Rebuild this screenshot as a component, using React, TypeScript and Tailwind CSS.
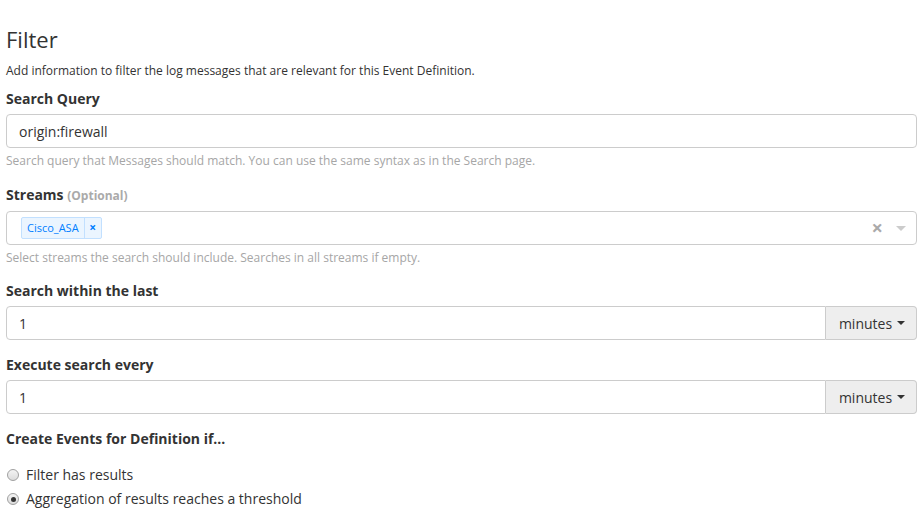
import React from "react";

function Caret() {
  return <span className="ml-[5px] inline-block h-0 w-0 border-x-[4px] border-t-[4px] border-x-transparent border-t-[#333] align-middle" />;
}

function Label({ children }: { children: React.ReactNode }) {
  return <div className="mb-[5px] text-[14px] font-bold leading-[20px] text-[#333]">{children}</div>;
}

function Help({ children }: { children: React.ReactNode }) {
  return <p className="mt-[4px] text-[12px] leading-[17px] text-[#a6a6a6]">{children}</p>;
}

function TimeInput({ value }: { value: string }) {
  return (
    <div className="flex h-[34px]">
      <div className="flex flex-1 items-center rounded-l-[4px] border border-[#ccc] bg-white px-[12px] text-[14px] text-[#333]">
        {value}
      </div>
      <div className="flex w-[91px] items-center justify-center rounded-r-[4px] border border-l-0 border-[#ccc] bg-[#eee] pl-[2px] text-[14px] text-[#333]">
        minutes
        <Caret />
      </div>
    </div>
  );
}

function Radio({ checked, label }: { checked?: boolean; label: string }) {
  return (
    <label className="flex h-[20px] items-center text-[14px] leading-[20px] text-[#333]">
      <span className="ml-[1px] mr-[7px] flex h-[12px] w-[12px] items-center justify-center rounded-full border border-[#a0a0a0] bg-gradient-to-b from-[#f4f4f4] to-[#dcdcdc]">
        {checked && <span className="h-[5px] w-[5px] rounded-full bg-[#333]" />}
      </span>
      {label}
    </label>
  );
}

export default function App() {
  return (
    <div className="min-h-[529px] bg-white pl-[6px] pr-[7px] pt-[26px] font-['Open_Sans',sans-serif] text-[#333]">
      <h2 className="text-[22px] leading-[26px] text-[#333]">Filter</h2>
      <p className="mt-[10px] text-[12px] leading-[17px] text-[#333]">
        Add information to filter the log messages that are relevant for this Event Definition.
      </p>

      <div className="mt-[10px]">
        <Label>Search Query</Label>
        <div className="flex h-[34px] items-center rounded-[4px] border border-[#ccc] px-[12px] text-[14px] text-[#333]">
          origin:firewall
        </div>
        <Help>Search query that Messages should match. You can use the same syntax as in the Search page.</Help>
      </div>

      <div className="mt-[16px]">
        <Label>
          Streams <span className="text-[12px] text-[#aaa]">(Optional)</span>
        </Label>
        <div className="flex h-[34px] items-center rounded-[4px] border border-[#ccc] pl-[14px] pr-[10px]">
          <span className="flex h-[22px] items-stretch rounded-[2px] border border-[#c2e0ff] bg-[#ebf5ff] text-[11px] text-[#007eff]">
            <span className="flex items-center px-[5px]">Cisco_ASA</span>
            <span className="flex w-[17px] items-center justify-center border-l border-[#c2e0ff] text-[12px] font-bold">×</span>
          </span>
          <span className="ml-auto mr-[13px] text-[20px] font-bold leading-none text-[#aaa]">×</span>
          <span className="h-0 w-0 border-x-[5px] border-t-[5px] border-x-transparent border-t-[#ccc]" />
        </div>
        <Help>Select streams the search should include. Searches in all streams if empty.</Help>
      </div>

      <div className="mt-[15px]">
        <Label>Search within the last</Label>
        <TimeInput value="1" />
      </div>

      <div className="mt-[15px]">
        <Label>Execute search every</Label>
        <TimeInput value="1" />
      </div>

      <div className="mt-[15px]">
        <Label>Create Events for Definition if...</Label>
      </div>

      <div className="mt-[16px] flex flex-col gap-[4px]">
        <Radio label="Filter has results" />
        <Radio checked label="Aggregation of results reaches a threshold" />
      </div>
    </div>
  );
}
